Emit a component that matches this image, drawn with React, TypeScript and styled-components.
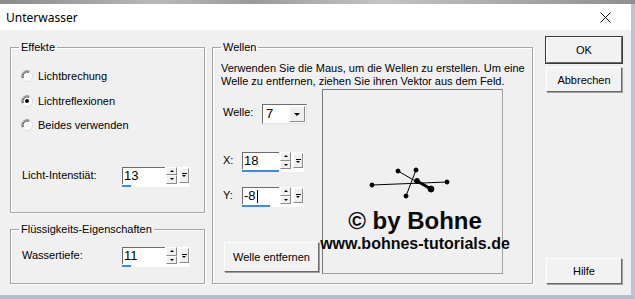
import React from 'react'
import styled, { createGlobalStyle } from 'styled-components'

const GlobalStyle = createGlobalStyle`
  html, body {
    margin: 0;
    padding: 0;
    background: #f0f0f0;
  }
  body {
    font-family: "Liberation Sans", Arial, sans-serif;
    font-size: 11px;
    color: #000;
  }
`

const Screen = styled.div`
  width: 635px;
  height: 299px;
  display: flex;
  flex-direction: column;
  overflow: hidden;
  background: #9fb0c2;
`

const TopStrip = styled.div`
  height: 4px;
  flex: none;
  background: linear-gradient(90deg, #8a8a8a 0%, #b9b9b9 25%, #9a9a9a 40%, #c4c4c4 60%, #8f8f8f 100%);
`

const Dialog = styled.div`
  flex: 1;
  display: flex;
  flex-direction: column;
  background: #f0f0f0;
  border-right: 4px solid #b7c5d3;
  border-bottom: 4px solid #aebfd0;
`

const TitleBar = styled.div`
  height: 26px;
  flex: none;
  display: flex;
  align-items: center;
  justify-content: space-between;
  padding: 0 20px 0 6px;
  background: #fff;
  font-family: "Noto Sans", "Open Sans", sans-serif;
  font-size: 12px;
`

const Body = styled.div`
  flex: 1;
  display: flex;
  align-items: flex-start;
  padding: 10px 0 0 10px;
`

const LeftCol = styled.div`
  width: 195px;
  display: flex;
  flex-direction: column;
  gap: 9px;
  margin-right: 7px;
`

const Group = styled.fieldset<{ $w?: number; $h: number }>`
  margin: 0;
  padding: 0;
  min-width: 0;
  box-sizing: border-box;
  width: ${p => (p.$w ? `${p.$w}px` : 'auto')};
  height: ${p => p.$h}px;
  border: 1px solid #a5a5a5;
  box-shadow: inset 1px 1px 0 #fff, 1px 1px 0 #fff;
`

const Legend = styled.legend`
  margin-left: 8px;
  padding: 0 2px;
  line-height: 14px;
  font-size: 11px;
`

const GroupBody = styled.div<{ $pt: number; $pl: number }>`
  display: flex;
  flex-direction: column;
  padding: ${p => p.$pt}px 0 0 ${p => p.$pl}px;
`

const RadioRow = styled.label`
  display: flex;
  align-items: center;
  gap: 5px;
  height: 24.5px;
`

const FieldRow = styled.div<{ $label: number; $mt?: number }>`
  display: grid;
  grid-template-columns: ${p => p.$label}px auto;
  align-items: start;
  margin-top: ${p => p.$mt ?? 0}px;
`

const FieldLabel = styled.span`
  line-height: 17px;
  padding-left: 1px;
`

const SpinBox = styled.div<{ $w: number }>`
  width: ${p => p.$w}px;
  height: 20px;
  background: #fff;
  display: flex;
  flex-direction: column;
`

const SpinTop = styled.div`
  display: flex;
  height: 17px;
`

const SpinInput = styled.div`
  flex: 1;
  border-top: 1px solid #6d6d6d;
  border-left: 1px solid #6d6d6d;
  font-size: 13px;
  line-height: 16px;
  padding-left: 1px;
  display: flex;
  align-items: center;
`

const Caret = styled.span`
  width: 1px;
  height: 13px;
  background: #000;
  margin-left: 1px;
`

const SpinArrows = styled.div`
  width: 11px;
  margin-left: 1px;
  display: flex;
  flex-direction: column;
`

const MiniBtn = styled.div`
  flex: 1;
  box-sizing: border-box;
  background: #f0f0f0;
  border: 1px solid;
  border-color: #fff #8a8a8a #8a8a8a #fff;
  display: flex;
  align-items: center;
  justify-content: center;
`

const DropBtn = styled(MiniBtn)`
  flex: none;
  width: 10px;
  height: 15px;
  margin: 1px 1px 0 2px;
  flex-direction: column;
  gap: 1px;
`

const Track = styled.div`
  height: 3px;
  display: flex;
  align-items: flex-end;
`

const Fill = styled.div<{ $w: number }>`
  width: ${p => p.$w}px;
  height: 2px;
  background: #3d8be2;
`

const Tri = styled.div<{ $up?: boolean; $s?: number }>`
  width: 0;
  height: 0;
  border-left: ${p => p.$s ?? 2}px solid transparent;
  border-right: ${p => p.$s ?? 2}px solid transparent;
  ${p => (p.$up ? 'border-bottom' : 'border-top')}: ${p => p.$s ?? 2}px solid #000;
`

const Bar = styled.div`
  width: 5px;
  height: 1px;
  background: #000;
`

const Combo = styled.div`
  width: 45px;
  height: 20px;
  box-sizing: border-box;
  background: #fff;
  border: 1px solid;
  border-color: #6d6d6d #e3e3e3 #e3e3e3 #6d6d6d;
  display: flex;
  font-size: 13px;
`

const ComboText = styled.span`
  flex: 1;
  padding-left: 3px;
  line-height: 18px;
`

const ComboBtn = styled(MiniBtn)`
  flex: none;
  width: 16px;
  margin: 1px;
`

const WellenText = styled.div`
  line-height: 13px;
  padding: 8px 0 0 8px;
`

const WellenMain = styled.div`
  display: flex;
  margin-top: 1px;
`

const Controls = styled.div`
  width: 100px;
  padding-left: 9px;
  display: flex;
  flex-direction: column;
`

const Canvas = styled.div`
  position: relative;
  width: 181px;
  height: 185px;
  box-sizing: border-box;
  border: 1px solid;
  border-color: #7a7a7a #a0a0a0 #a0a0a0 #7a7a7a;
`

const Vector = styled.svg`
  position: absolute;
  left: 0;
  top: 0;
`

const Watermark = styled.div`
  position: absolute;
  left: -10px;
  right: -10px;
  display: flex;
  flex-direction: column;
  align-items: center;
  top: 118px;
  font-family: "Liberation Sans", Arial, sans-serif;
  font-weight: bold;
  color: #0a0a0a;
  white-space: nowrap;
  pointer-events: none;
`

const BigMark = styled.span`
  font-size: 24px;
  line-height: 26px;
  padding-left: 5px;
`

const SmallMark = styled.span`
  font-size: 16px;
  line-height: 20px;
  padding-left: 5px;
`

const Button = styled.div<{ $w: number; $h: number; $default?: boolean }>`
  width: ${p => p.$w}px;
  height: ${p => p.$h}px;
  box-sizing: border-box;
  background: #f2f2f2;
  border: 1px solid;
  border-color: #fff #696969 #696969 #fff;
  box-shadow: ${p => (p.$default ? '0 0 0 1px #3a3a3a' : '1px 1px 0 #a0a0a0')};
  display: flex;
  align-items: center;
  justify-content: center;
  font-size: 11px;
`

const RemoveButton = styled(Button)`
  margin: 35px 0 0 2px;
`

const ButtonCol = styled.div`
  margin: -3px 0 0 13px;
  width: 76px;
  height: 247px;
  display: flex;
  flex-direction: column;
  gap: 4px;
`

const Spacer = styled.div`
  flex: 1;
`

function Radio({ checked }: { checked?: boolean }) {
  return (
    <svg width="12" height="12" viewBox="0 0 12 12">
      <circle cx="6" cy="6" r="5.5" fill="#fff" stroke="#dcdcdc" strokeWidth="1" />
      <path d="M1.2 8.5 A5.5 5.5 0 0 1 8.5 1.2" stroke="#8a8a8a" strokeWidth="1" fill="none" />
      <path d="M2.3 8 A4.3 4.3 0 0 1 8 2.3" stroke="#3c3c3c" strokeWidth="1" fill="none" />
      {checked && <circle cx="6" cy="6" r="2" fill="#000" />}
    </svg>
  )
}

function Spin({ value, w, fill, caret }: { value: string; w: number; fill: number; caret?: boolean }) {
  return (
    <SpinBox $w={w}>
      <SpinTop>
        <SpinInput>
          {value}
          {caret && <Caret />}
        </SpinInput>
        <SpinArrows>
          <MiniBtn>
            <Tri $up />
          </MiniBtn>
          <MiniBtn>
            <Tri />
          </MiniBtn>
        </SpinArrows>
        <DropBtn>
          <Bar />
          <Tri $s={2.5} />
        </DropBtn>
      </SpinTop>
      <Track>
        <Fill $w={fill} />
      </Track>
    </SpinBox>
  )
}

export default function App() {
  return (
    <Screen>
      <GlobalStyle />
      <TopStrip />
      <Dialog>
        <TitleBar>
          <span>Unterwasser</span>
          <svg width="11" height="11" viewBox="0 0 11 11">
            <path d="M0.5 0.5 L10.5 10.5 M10.5 0.5 L0.5 10.5" stroke="#111" strokeWidth="1" />
          </svg>
        </TitleBar>
        <Body>
          <LeftCol>
            <Group $h={173}>
              <Legend>Effekte</Legend>
              <GroupBody $pt={10} $pl={10}>
                <RadioRow>
                  <Radio />
                  Lichtbrechung
                </RadioRow>
                <RadioRow>
                  <Radio checked />
                  Lichtreflexionen
                </RadioRow>
                <RadioRow>
                  <Radio />
                  Beides verwenden
                </RadioRow>
                <FieldRow $label={101} $mt={29}>
                  <FieldLabel>Licht-Intenstiät:</FieldLabel>
                  <Spin value="13" w={68} fill={9} />
                </FieldRow>
              </GroupBody>
            </Group>
            <Group $h={62}>
              <Legend>Flüssigkeits-Eigenschaften</Legend>
              <GroupBody $pt={11} $pl={10}>
                <FieldRow $label={101}>
                  <FieldLabel>Wassertiefe:</FieldLabel>
                  <Spin value="11" w={68} fill={9} />
                </FieldRow>
              </GroupBody>
            </Group>
          </LeftCol>

          <Group $w={321} $h={244}>
            <Legend>Wellen</Legend>
            <WellenText>
              Verwenden Sie die Maus, um die Wellen zu erstellen. Um eine
              <br />
              Welle zu entfernen, ziehen Sie ihren Vektor aus dem Feld.
            </WellenText>
            <WellenMain>
              <Controls>
                <FieldRow $label={40} $mt={15}>
                  <FieldLabel>Welle:</FieldLabel>
                  <Combo>
                    <ComboText>7</ComboText>
                    <ComboBtn>
                      <Tri $s={3.5} />
                    </ComboBtn>
                  </Combo>
                </FieldRow>
                <FieldRow $label={20} $mt={28}>
                  <FieldLabel>X:</FieldLabel>
                  <Spin value="18" w={62} fill={37} />
                </FieldRow>
                <FieldRow $label={20} $mt={15}>
                  <FieldLabel>Y:</FieldLabel>
                  <Spin value="-8" w={62} fill={28} caret />
                </FieldRow>
                <RemoveButton $w={95} $h={30}>
                  Welle entfernen
                </RemoveButton>
              </Controls>
              <Canvas>
                <Vector width="181" height="185" viewBox="0 0 181 185">
                  <g stroke="#000" fill="#000">
                    <line x1="49" y1="95" x2="124" y2="92" strokeWidth="1" />
                    <line x1="75" y1="81" x2="94" y2="92" strokeWidth="1" />
                    <line x1="93" y1="80" x2="83" y2="106" strokeWidth="1" />
                    <line x1="94" y1="91" x2="108" y2="99" strokeWidth="3" />
                    <circle cx="49" cy="95" r="2" />
                    <circle cx="124" cy="92" r="2" />
                    <circle cx="75" cy="81" r="2" />
                    <circle cx="93" cy="80" r="2" />
                    <circle cx="83" cy="106" r="2" />
                    <circle cx="94" cy="91" r="2.5" />
                    <circle cx="108" cy="99" r="3" />
                  </g>
                </Vector>
                <Watermark>
                  <BigMark>© by Bohne</BigMark>
                  <SmallMark>www.bohnes-tutorials.de</SmallMark>
                </Watermark>
              </Canvas>
            </WellenMain>
          </Group>

          <ButtonCol>
            <Button $w={76} $h={26} $default>
              OK
            </Button>
            <Button $w={76} $h={25}>
              Abbrechen
            </Button>
            <Spacer />
            <Button $w={76} $h={26}>
              Hilfe
            </Button>
          </ButtonCol>
        </Body>
      </Dialog>
    </Screen>
  )
}
